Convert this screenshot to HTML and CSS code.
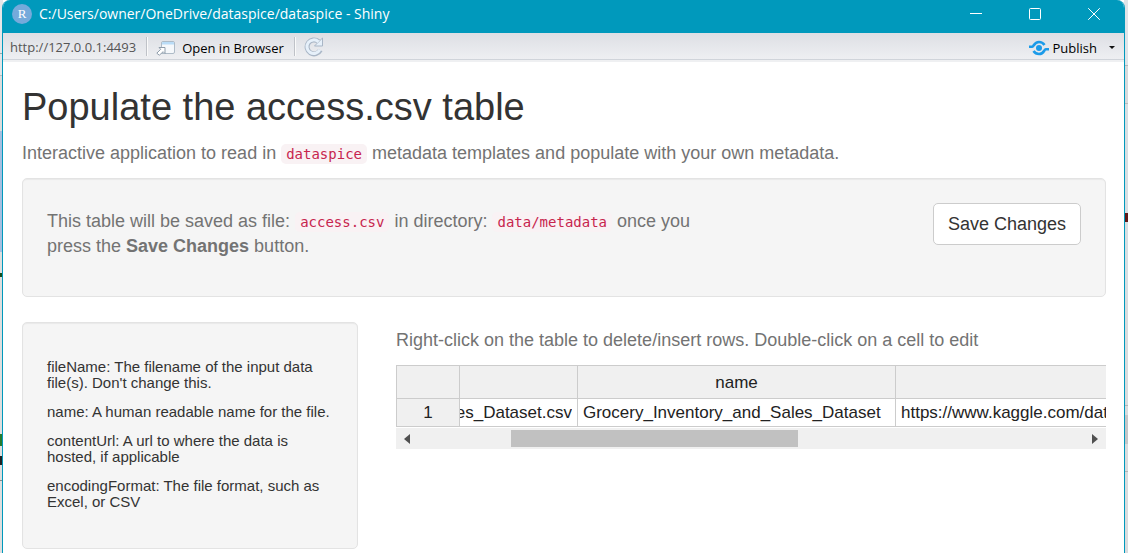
FILE: index.html
```html
<!DOCTYPE html>
<html lang="en">
<head>
<meta charset="utf-8">
<title>C:/Users/owner/OneDrive/dataspice/dataspice - Shiny</title>
<link rel="stylesheet" href="styles.css">
</head>
<body>
<div class="window">
  <header class="titlebar">
    <span class="app-icon">R</span>
    <span class="title">C:/Users/owner/OneDrive/dataspice/dataspice - Shiny</span>
    <div class="window-controls">
      <button type="button" aria-label="Minimize"><svg width="14" height="14" viewBox="0 0 14 14"><path d="M1 6.500H13"/></svg></button>
      <button type="button" aria-label="Maximize"><svg width="14" height="14" viewBox="0 0 14 14"><rect x="1.500" y="1.500" width="11" height="11" rx="1"/></svg></button>
      <button type="button" aria-label="Close"><svg width="14" height="14" viewBox="0 0 14 14"><path d="M1.200 1.200L12.800 12.800M12.800 1.200L1.200 12.800"/></svg></button>
    </div>
  </header>
  <nav class="toolbar">
    <span class="url">http://127.0.0.1:4493</span>
    <span class="divider"></span>
    <button type="button" class="tool open">
      <svg width="20" height="16" viewBox="0 0 20 16" fill="none">
        <path d="M5.500 13.500V3Q5.500 1.500 7 1.500H17Q18.500 1.500 18.500 3V12Q18.500 13.500 17 13.500Z" fill="#f5f8fb" stroke="#aebbc7"/>
        <path d="M6 4.500V3Q6 2 7 2H17Q18 2 18 3V4.500Z" fill="#b9dcf7"/>
        <path d="M.8 13.200L4.700 9.300L3 7.500H9V13.500L7.200 11.700L3.300 15.200Z" fill="#fff" stroke="#8f9dab"/>
      </svg>
      Open in Browser
    </button>
    <span class="divider"></span>
    <button type="button" class="tool reload" aria-label="Reload">
      <svg width="20" height="20" viewBox="0 0 20 20" fill="none">
        <path d="M14.500 4.500A7 7 0 1 0 16.300 13.200" stroke="#a9b6c6" stroke-width="5"/>
        <path d="M18.500 1V9H10.500L13.200 6.300L15.800 3.700Z" fill="#e6f0fa" stroke="#a9b6c6"/>
        <path d="M14.500 4.800A6.800 6.800 0 1 0 15.800 12.800" stroke="#e6f0fa" stroke-width="3"/>
      </svg>
    </button>
    <button type="button" class="tool publish">
      <svg width="20" height="16" viewBox="0 0 20 16" fill="none">
        <circle cx="10" cy="8" r="3" fill="#1c9be9"/>
        <path d="M0 6.700H3.200C5 6.700 4.800 2 10 2C13 2 14.500 3.500 15.500 5" stroke="#1c9be9" stroke-width="2.600"/>
        <path d="M20 9.300H16.800C15 9.300 15.200 14 10 14C7 14 5.500 12.500 4.500 11" stroke="#1c9be9" stroke-width="2.600"/>
      </svg>
      Publish
    </button>
    <button type="button" class="tool more" aria-label="Publish options"><svg width="6" height="3" viewBox="0 0 6 3"><path d="M0 0H6L3 3Z" fill="#111"/></svg></button>
  </nav>
  <main class="page">
    <h1>Populate the access.csv table</h1>
    <p class="help">Interactive application to read in <code>dataspice</code> metadata templates and populate with your own metadata.</p>
    <section class="well save-panel">
      <p class="help save-text">This table will be saved as file: <code>access.csv</code> in directory: <code>data/metadata</code> once you press the <strong>Save Changes</strong> button.</p>
      <button type="button" class="save">Save Changes</button>
    </section>
    <div class="columns">
      <aside class="well glossary">
        <p>fileName: The filename of the input data file(s). Don't change this.</p>
        <p>name: A human readable name for the file.</p>
        <p>contentUrl: A url to where the data is hosted, if applicable</p>
        <p>encodingFormat: The file format, such as Excel, or CSV</p>
      </aside>
      <section class="data">
        <p class="help">Right-click on the table to delete/insert rows. Double-click on a cell to edit</p>
        <table class="sheet">
          <colgroup><col class="c-row"><col class="c-file"><col class="c-name"><col></colgroup>
          <thead><tr><th></th><th></th><th>name</th><th></th></tr></thead>
          <tbody><tr><th>1</th><td><div class="scrolled"><span>Sales_Dataset.csv</span></div></td><td>Grocery_Inventory_and_Sales_Dataset</td><td>https://www.kaggle.com/datasets</td></tr></tbody>
        </table>
        <div class="scrollbar">
          <button type="button" aria-label="Scroll left"><svg width="6" height="10" viewBox="0 0 6 10"><path d="M6 0V10L0 5Z"/></svg></button>
          <div class="track"><div class="thumb"></div></div>
          <button type="button" aria-label="Scroll right"><svg width="6" height="10" viewBox="0 0 6 10"><path d="M0 0V10L6 5Z"/></svg></button>
        </div>
      </section>
    </div>
  </main>
</div>
</body>
</html>
```

FILE: styles.css
```css
* { box-sizing: border-box; }
html, body { height: 100%; }
body {
  margin: 0;
  padding: 0 3px 0 2px;
  overflow: hidden;
  font: 18px/25px "Liberation Sans", Arial, sans-serif;
  color: #333;
  /* desktop windows showing along the two edges */
  background:
    linear-gradient(#e6e6e8 0 53px, #9aa 53px 54px, #e3e5e7 54px 75px, #bbb 75px 76px, #dcdcdc 76px 131px, #a5bfe0 131px 252px, #dedede 252px 273px, #174d1b 273px 277px, #dedede 277px 434px, #267a2c 434px 446px, #dedede 446px 456px, #222 456px 465px, #dedede 465px 480px, #888 480px 481px, #dedede 481px) left / 3px 100% no-repeat,
    linear-gradient(#dfe4e8 0 65px, #b5b8bb 65px 66px, #d8d9db 66px 103px, #bbb 103px 104px, #d8dee2 104px 213px, #601818 213px 222px, #d8dee2 222px 300px, #dadbdd 300px 405px, #b5b5b7 405px 406px, #dadbdd 406px 415px, #c6c6c8 415px 444px, #dadbdd 444px 471px, #b5b5b7 471px 472px, #dadbdd 472px) right / 4px 100% no-repeat;
}
button { font: inherit; color: inherit; margin: 0; padding: 0; border: 0; background: none; }
svg { display: block; flex: none; }
p, h1 { margin: 0; }

.window {
  min-height: 100%;
  border: solid #0099bc;
  border-width: 0 1px;
  border-radius: 8px 8px 0 0;
  overflow: hidden;
  background: #fff;
}
.titlebar {
  display: flex;
  align-items: center;
  height: 33px;
  padding: 0 16px 5px 9px;
  background: #0099bc;
  color: #fff;
  font: 14px/20px "Open Sans", "Noto Sans", sans-serif;
}
.app-icon {
  width: 20px;
  height: 20px;
  margin-right: 7px;
  border-radius: 50%;
  background: #75aadb;
  text-align: center;
  font: 13px/20px "Liberation Serif", serif;
}
.window-controls { display: flex; gap: 30px; margin-left: auto; }
.window-controls button { display: flex; justify-content: center; width: 29px; }
.window-controls svg { fill: none; stroke: #fff; stroke-width: 1; }

.toolbar {
  display: flex;
  align-items: center;
  height: 29px;
  padding: 0 9px 0 7px;
  border-bottom: 2px solid #eff0f2;
  background: linear-gradient(#dddfe4, #eeeff2 26px, #d0d4da 26px);
  color: #000;
  font: 13px/20px "Open Sans", "Noto Sans", sans-serif;
}
.url { color: #555; }
.divider { width: 2px; height: 19px; margin: 0 8px 0 10px; border-left: 1px solid #bfc2c8; border-right: 1px solid #fafafa; }
.tool { display: flex; align-items: center; padding-top: 2px; }
.reload { padding-top: 0; }
.open { gap: 6px; }
.publish { gap: 4px; margin-left: auto; }
.more { margin-left: 12px; }

.page { padding: 25px 18px 0 19px; }
h1 { margin-bottom: 13px; font-size: 38px; line-height: 41px; font-weight: 400; }
.help { color: #737373; }
code {
  padding: 2px 5px;
  border-radius: 5px;
  background: #f9f2f4;
  color: #c7254e;
  font: 14px/20px "DejaVu Sans Mono", "Liberation Mono", monospace;
}
.well {
  padding: 24px;
  border: 1px solid #e3e3e3;
  border-radius: 5px;
  background: #f5f5f5;
  box-shadow: inset 0 1px 1px rgba(0, 0, 0, .05);
}
.save-panel { display: flex; align-items: flex-start; justify-content: space-between; margin: 12px 0 25px; }
.save-text { width: 64%; padding: 6px 0 13px; }
.save {
  padding: 8px 14px;
  border: 1px solid #ccc;
  border-radius: 5px;
  background: #fff;
  line-height: 24px;
  white-space: nowrap;
}
.columns { display: grid; grid-template-columns: calc((100% - 76px) / 3) minmax(0, 1fr); gap: 38px; align-items: start; }
.glossary { padding: 36px 24px 25px; font-size: 15px; line-height: 16px; }
.glossary p { margin-bottom: 13px; }
.data { padding-top: 6px; min-width: 0; }

.sheet {
  width: 100%;
  margin-top: 12px;
  table-layout: fixed;
  border-collapse: separate;
  border-spacing: 0;
  border-top: 1px solid #ccc;
  border-left: 1px solid #ccc;
  color: #222;
  font-size: 17px;
  line-height: 27px;
}
.c-row { width: 63px; }
.c-file { width: 118px; }
.c-name { width: 318px; }
.sheet th, .sheet td {
  padding: 0 5px;
  overflow: hidden;
  white-space: nowrap;
  border-right: 1px solid #ccc;
  border-bottom: 1px solid #ccc;
}
.sheet th { background: #f0f0f0; font-weight: 400; }
.sheet thead th { height: 33px; }
.sheet tr > :last-child { border-right: 0; padding-right: 0; }
.sheet td:nth-child(2) { padding-left: 0; }
.scrolled { display: flex; justify-content: flex-end; overflow: hidden; }

.scrollbar { display: flex; height: 21px; margin-top: 1px; background: #f0f0f0; }
.scrollbar button { display: flex; align-items: center; justify-content: center; width: 22px; }
.scrollbar path { fill: #505050; }
.track { flex: 1; padding: 2px 0; }
.thumb { width: 43%; height: 17px; margin-left: 14%; background: #c1c1c1; }
```
